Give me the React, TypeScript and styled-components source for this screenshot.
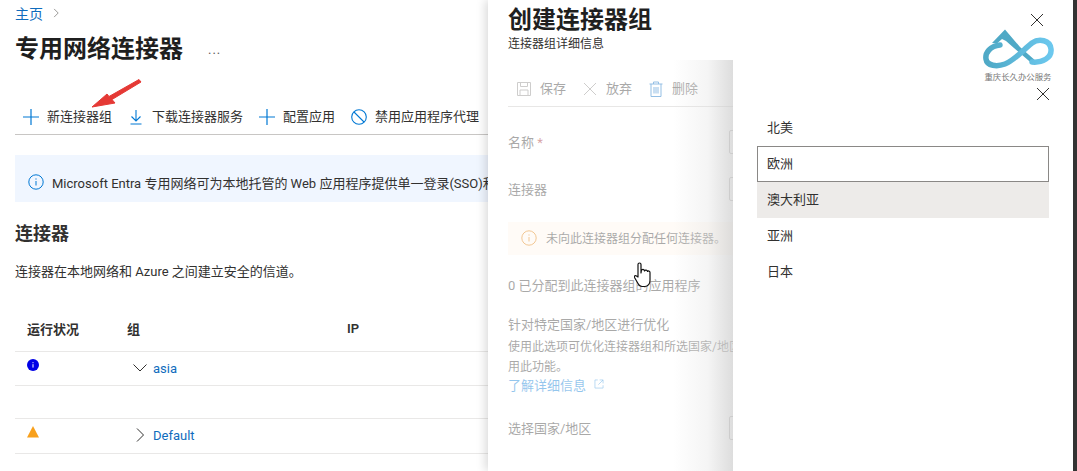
import React from 'react';
import styled, { createGlobalStyle } from 'styled-components';

const GlobalStyle = createGlobalStyle`
    html, body {
        margin: 0;
        padding: 0;
        background: #fff;
    }
    body {
        font-family: Roboto, "Noto Sans CJK SC", sans-serif;
        font-size: 13px;
        color: #323130;
    }
    * {
        box-sizing: border-box;
    }
`;

const BLUE = '#0f6cbd';

const Page = styled.div`
    position: relative;
    display: flex;
    width: 1077px;
    height: 471px;
    overflow: hidden;
    background: #fff;
`;

const Main = styled.main`
    flex: 0 0 488px;
    padding-left: 15px;
    overflow: hidden;
`;

const Breadcrumb = styled.nav`
    display: flex;
    align-items: center;
    gap: 8px;
    height: 20px;
    margin-top: 3px;
    font-size: 14px;
    color: ${BLUE};
`;

const TitleRow = styled.div`
    display: flex;
    align-items: center;
    height: 40px;
    margin-top: 6px;
`;

const PageTitle = styled.h1`
    margin: 0;
    font-size: 24px;
    line-height: 40px;
    font-weight: 700;
    color: #1f1f1f;
`;

const More = styled.span`
    margin-left: 25px;
    font-size: 13px;
    letter-spacing: 1px;
    color: #605e5c;
`;

const Toolbar = styled.div`
    display: flex;
    align-items: center;
    gap: 16px;
    height: 35px;
    margin-top: 31px;
    padding-left: 8px;
    border-bottom: 1px solid #c8c6c4;
    white-space: nowrap;
`;

const ToolItem = styled.span`
    display: flex;
    align-items: center;
    gap: 8px;
    font-size: 13px;
    line-height: 18px;
    color: #323130;
`;

const InfoBar = styled.div`
    display: flex;
    align-items: center;
    gap: 8px;
    height: 47px;
    margin-top: 20px;
    padding: 7px 0 0 13px;
    background: #f0f6ff;
    font-size: 13px;
    white-space: nowrap;
`;

const Heading = styled.h2`
    margin: 20px 0 0;
    font-size: 18px;
    line-height: 24px;
    font-weight: 700;
    color: #323130;
`;

const Description = styled.p`
    margin: 16px 0 0;
    font-size: 13px;
    line-height: 20px;
`;

const Row = styled.div<{ $height: number }>`
    display: grid;
    grid-template-columns: 112px 220px 1fr;
    height: ${(p) => p.$height}px;
    border-bottom: 1px solid #e9e8e7;
`;

const HeaderRow = styled(Row)`
    align-items: center;
    margin-top: 25px;
    padding-bottom: 2px;
    font-weight: 600;
`;

const HeaderCell = styled.div<{ $first?: boolean }>`
    padding-left: ${(p) => (p.$first ? 12 : 0)}px;
    color: #323130;
`;

const StatusCell = styled.div`
    display: flex;
    align-items: flex-start;
    padding: 7px 0 0 12px;
`;

const GroupCell = styled.div`
    display: flex;
    align-items: center;
    gap: 5px;
    height: 20px;
    margin-top: 6px;
    padding-left: 5px;
`;

const GroupLink = styled.a`
    font-size: 13px;
    color: ${BLUE};
`;

const Blade = styled.section`
    position: relative;
    flex: 1;
    box-shadow: -3px 0 9px rgba(0, 0, 0, 0.14);
    background: #fff;
`;

const BladeHeader = styled.header`
    height: 60px;
    padding: 4px 20px 0;
`;

const BladeTitle = styled.h2`
    margin: 0;
    font-size: 24px;
    line-height: 32px;
    font-weight: 700;
    color: #1f1f1f;
`;

const BladeSub = styled.p`
    margin: 0;
    font-size: 12px;
    line-height: 16px;
    color: #323130;
`;

const CloseButton = styled.span`
    position: absolute;
    top: 12px;
    right: 32px;
    display: flex;
`;

const BladeBody = styled.div`
    position: relative;
    height: 411px;
    padding-left: 20px;
    overflow: hidden;
    &::after {
        content: '';
        position: absolute;
        inset: 0;
        background: linear-gradient(
            to right,
            rgba(255, 255, 255, 0.58) 0,
            rgba(255, 255, 255, 0.58) 185px,
            rgba(240, 240, 240, 0.7) 220px,
            rgba(215, 215, 215, 0.85) 245px
        );
    }
`;

const BladeToolbar = styled.div`
    display: flex;
    align-items: center;
    gap: 16px;
    height: 47px;
    padding: 12px 0 0 8px;
    border-bottom: 1px solid #c8c6c4;
`;

const FormRow = styled.div<{ $top: number }>`
    display: grid;
    grid-template-columns: 221px 1fr;
    align-items: center;
    height: 24px;
    margin-top: ${(p) => p.$top}px;
`;

const FormLabel = styled.span`
    padding-bottom: 2px;
`;

const Required = styled.span`
    color: #a4262c;
`;

const FieldBox = styled.div`
    height: 24px;
    border: 1px solid #8a8886;
    border-radius: 2px;
`;

const WarningBar = styled.div`
    display: flex;
    align-items: center;
    gap: 9px;
    height: 33px;
    margin-top: 21px;
    padding: 0 0 2px 13px;
    background: #fff6ec;
    font-size: 12px;
    white-space: nowrap;
`;

const Line = styled.div<{ $top?: number; $small?: boolean }>`
    height: 20px;
    margin-top: ${(p) => p.$top || 0}px;
    font-size: ${(p) => (p.$small ? 12 : 13)}px;
    line-height: 20px;
    white-space: nowrap;
`;

const LearnMore = styled.a`
    display: flex;
    align-items: center;
    gap: 8px;
    height: 20px;
    margin-top: -3px;
    font-size: 13px;
    color: #0078d4;
`;

const Dropdown = styled.aside`
    position: absolute;
    left: 245px;
    right: 4px;
    top: 60px;
    bottom: 0;
    padding: 50px 24px 0;
    background: #fff;
`;

const DropdownClose = styled.span`
    position: absolute;
    top: 26px;
    right: 22px;
    display: flex;
`;

const Option = styled.div<{ $focused?: boolean; $hovered?: boolean }>`
    display: flex;
    align-items: center;
    height: 36px;
    padding: 0 0 3px 10px;
    font-size: 13px;
    color: #323130;
    background: ${(p) => (p.$hovered ? '#edebe9' : 'transparent')};
    outline: ${(p) => (p.$focused ? '1px solid #8a8886' : 'none')};
    outline-offset: -1px;
`;

const EdgeStrip = styled.div`
    position: absolute;
    top: 0;
    right: 0;
    bottom: 0;
    width: 4px;
    background: #333;
`;

const Watermark = styled.div`
    position: absolute;
    left: 980px;
    top: 28px;
    width: 76px;
    display: flex;
    flex-direction: column;
    align-items: center;
`;

const WatermarkText = styled.span`
    margin-top: -1px;
    font-size: 8.4px;
    line-height: 12px;
    white-space: nowrap;
    color: #777;
`;

const Arrow = styled.svg`
    position: absolute;
    left: 88px;
    top: 76px;
`;

const Cursor = styled.svg`
    position: absolute;
    left: 634px;
    top: 262px;
`;

const Icon = ({ size = 16, color = '#323130', sw = 1, children }: { size?: number; color?: string; sw?: number; children: React.ReactNode }) => (
    <svg width={size} height={size} viewBox="0 0 16 16" fill="none" stroke={color} strokeWidth={sw} style={{ flex: 'none' }}>
        {children}
    </svg>
);

const PlusIcon = () => (
    <Icon color="#0078d4" sw={1.2}>
        <path d="M8 0v16M0 8h16" />
    </Icon>
);

const DownloadIcon = () => (
    <Icon color="#0078d4" sw={1.1}>
        <path d="M8 1v10.5M3.500 7.500 8 12l4.500-4.500M2.500 15h11" />
    </Icon>
);

const BanIcon = () => (
    <Icon color="#0078d4" sw={1.1}>
        <circle cx="8" cy="8" r="7.300" />
        <path d="M3 3l10 10" />
    </Icon>
);

const InfoIcon = ({ color = '#0078d4' }: { color?: string }) => (
    <Icon color={color}>
        <circle cx="8" cy="8" r="7.200" />
        <path d="M8 7v4.500M8 4.400v1.200" />
    </Icon>
);

const CloseIcon = () => (
    <Icon color="#323130">
        <path d="M2 2l12 12M14 2 2 14" />
    </Icon>
);

const SaveIcon = () => (
    <Icon color="#8a8886">
        <path d="M1.500 1.500h13v13h-13zM4.500 1.500v4h7v-4M4 14.500V9h8v5.500" />
    </Icon>
);

const DiscardIcon = () => (
    <Icon color="#8a8886">
        <path d="M2 2l12 12M14 2 2 14" />
    </Icon>
);

const TrashIcon = () => (
    <Icon color="#0067c0">
        <path d="M1.500 3h13M5.500 3V1h5v2M3 3v12.500h10V3M6 6v6.500M8 6v6.500M10 6v6.500" />
    </Icon>
);

const LinkOutIcon = () => (
    <Icon size={10} color="#0078d4">
        <path d="M6 1.500H1.500v13h13V10M9 1.500h5.500V7M14.500 1.500 7 9" />
    </Icon>
);

const StatusInfo = () => (
    <svg width="12" height="12" viewBox="0 0 12 12">
        <circle cx="6" cy="6" r="6" fill="#0000e6" />
        <path d="M6 5.200v3.400M6 3.200v1" stroke="#fff" strokeWidth="1" />
    </svg>
);

const StatusWarn = () => (
    <svg width="12" height="12" viewBox="0 0 12 12">
        <path d="M6 0 12 11.500H0z" fill="#f8a01c" />
    </svg>
);

const Chevron = ({ open }: { open?: boolean }) => (
    <Icon>
        {open ? <path d="M1.500 4.500 8 11l6.500-6.500" /> : <path d="M5 1.500 11.500 8 5 14.500" />}
    </Icon>
);

const Logo = () => (
    <svg width="76" height="44" viewBox="0 0 76 44" fill="none">
        <defs>
            <linearGradient id="logoLoop" x1="0" x2="1" y1="0" y2="0">
                <stop offset="0" stopColor="#4fa9c6" />
                <stop offset="1" stopColor="#6cc8ee" />
            </linearGradient>
        </defs>
        <path d="M25 1.500 12 15 17 15.500 22 11 26 13 52 35.500 57 34 40 19z" fill="#4fa9c6" />
        <path
            d="M20 17C10 18 5 25 6 31 7 38 17 39 25 36 35 32 43 22 52 15 59 10 70 12 71 21 72 30 62 35 52 34"
            stroke="url(#logoLoop)"
            strokeWidth="5.500"
            strokeLinecap="round"
        />
    </svg>
);

const App = () => {
    return (
        <Page>
            <GlobalStyle />
            <Main>
                <Breadcrumb>
                    主页
                    <Icon size={10} color="#605e5c">
                        <path d="M5 1.500 11.500 8 5 14.500" />
                    </Icon>
                </Breadcrumb>
                <TitleRow>
                    <PageTitle>专用网络连接器</PageTitle>
                    <More>...</More>
                </TitleRow>
                <Toolbar>
                    <ToolItem><PlusIcon />新连接器组</ToolItem>
                    <ToolItem><DownloadIcon />下载连接器服务</ToolItem>
                    <ToolItem><PlusIcon />配置应用</ToolItem>
                    <ToolItem><BanIcon />禁用应用程序代理</ToolItem>
                </Toolbar>
                <InfoBar>
                    <InfoIcon />
                    Microsoft Entra 专用网络可为本地托管的 Web 应用程序提供单一登录(SSO)和
                </InfoBar>
                <Heading>连接器</Heading>
                <Description>连接器在本地网络和 Azure 之间建立安全的信道。</Description>
                <HeaderRow $height={45}>
                    <HeaderCell $first>运行状况</HeaderCell>
                    <HeaderCell>组</HeaderCell>
                    <HeaderCell>IP</HeaderCell>
                </HeaderRow>
                <Row $height={34}>
                    <StatusCell><StatusInfo /></StatusCell>
                    <GroupCell><Chevron open /><GroupLink>asia</GroupLink></GroupCell>
                </Row>
                <Row $height={33} />
                <Row $height={35}>
                    <StatusCell><StatusWarn /></StatusCell>
                    <GroupCell><Chevron /><GroupLink>Default</GroupLink></GroupCell>
                </Row>
            </Main>
            <Blade>
                <BladeHeader>
                    <BladeTitle>创建连接器组</BladeTitle>
                    <BladeSub>连接器组详细信息</BladeSub>
                </BladeHeader>
                <CloseButton><CloseIcon /></CloseButton>
                <BladeBody>
                    <BladeToolbar>
                        <ToolItem><SaveIcon />保存</ToolItem>
                        <ToolItem><DiscardIcon />放弃</ToolItem>
                        <ToolItem><TrashIcon />删除</ToolItem>
                    </BladeToolbar>
                    <FormRow $top={23}>
                        <FormLabel>名称 <Required>*</Required></FormLabel>
                        <FieldBox />
                    </FormRow>
                    <FormRow $top={23}>
                        <FormLabel>连接器</FormLabel>
                        <FieldBox />
                    </FormRow>
                    <WarningBar>
                        <InfoIcon color="#e07a00" />
                        未向此连接器组分配任何连接器。
                    </WarningBar>
                    <Line $top={21}>0 已分配到此连接器组的应用程序</Line>
                    <Line $top={19}>针对特定国家/地区进行优化</Line>
                    <Line $small $top={2}>使用此选项可优化连接器组和所选国家/地区</Line>
                    <Line $small>用此功能。</Line>
                    <LearnMore>了解详细信息<LinkOutIcon /></LearnMore>
                    <FormRow $top={22}>
                        <FormLabel>选择国家/地区</FormLabel>
                        <FieldBox />
                    </FormRow>
                </BladeBody>
                <Dropdown>
                    <DropdownClose><CloseIcon /></DropdownClose>
                    <Option>北美</Option>
                    <Option $focused>欧洲</Option>
                    <Option $hovered>澳大利亚</Option>
                    <Option>亚洲</Option>
                    <Option>日本</Option>
                </Dropdown>
            </Blade>
            <EdgeStrip />
            <Watermark>
                <Logo />
                <WatermarkText>重庆长久办公服务</WatermarkText>
            </Watermark>
            <Arrow width="56" height="36" viewBox="0 0 56 36">
                <path d="M4 31 19 18 21 20.500 51 3.500 53 6 24 23.500 27 27z" fill="#e53935" stroke="#e53935" strokeLinejoin="round" />
            </Arrow>
            <Cursor width="24" height="28" viewBox="0 0 24 28">
                <path
                    d="M4 2.500c0-2 3-2 3 0V11l.5-3c1.500-1 3-.5 3 1 .5-1.500 3-1 3 .5 .5-1 2.500-.5 2.500 1 v8c0 3-2 6-5 6H8c-2 0-3-1-4-3l-3.500-6c-.5-1.500 1-2.500 2-1.500L4 15z"
                    fill="#fff"
                    stroke="#111"
                    strokeWidth="1.200"
                    strokeLinejoin="round"
                />
            </Cursor>
        </Page>
    );
};

export default App;
